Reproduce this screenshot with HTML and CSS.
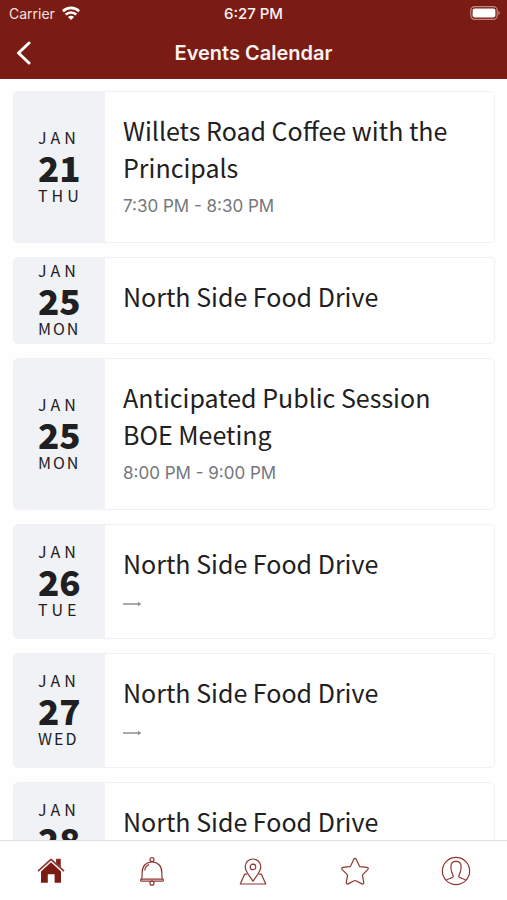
FILE: index.html
```html
<!DOCTYPE html>
<html lang="en">
<head>
<meta charset="utf-8">
<meta name="viewport" content="width=device-width, initial-scale=1">
<title>Events Calendar</title>
<link rel="stylesheet" href="styles.css">
</head>
<body>
<header class="top">
  <div class="status">
    <div class="carrier">
      <span>Carrier</span>
      <svg width="18" height="14" viewBox="0 0 18 14" fill="none" stroke="#fff" stroke-width="2.6" aria-hidden="true">
        <path d="M.9 5.200a11.600 11.600 0 0 1 16.200 0M3.700 8.600a7.600 7.600 0 0 1 10.600 0"/>
        <path d="M9 14 6 10.900a4.200 4.200 0 0 1 6 0z" fill="#fff" stroke="none"/>
      </svg>
    </div>
    <span class="clock">6:27 PM</span>
    <svg class="battery" width="30" height="14" viewBox="0 0 30 14" aria-hidden="true">
      <rect x=".8" y=".6" width="26.4" height="12.8" rx="3.8" fill="none" stroke="#bd8984" stroke-width="1.2"/>
      <rect x="2.6" y="2.4" width="22.8" height="9.2" rx="2" fill="#fff"/>
      <path d="M28.4 4.8q3 2.2 0 4.4z" fill="#bd8984"/>
    </svg>
  </div>
  <div class="nav">
    <button class="back" type="button" aria-label="Back">
      <svg width="16" height="24" viewBox="0 0 16 24" fill="none" stroke="#fff" stroke-width="3" stroke-linecap="round" stroke-linejoin="round"><path d="M13 2 2.500 12 13 22"/></svg>
    </button>
    <h1>Events Calendar</h1>
  </div>
</header>

<main class="events">
  <article class="card">
    <div class="date"><span class="label">JAN</span><span class="num">21</span><span class="label">THU</span></div>
    <div class="info"><h2>Willets Road Coffee with the Principals</h2><p>7:30 PM - 8:30 PM</p></div>
  </article>
  <article class="card">
    <div class="date"><span class="label">JAN</span><span class="num">25</span><span class="label wide">MON</span></div>
    <div class="info"><h2>North Side Food Drive</h2></div>
  </article>
  <article class="card">
    <div class="date"><span class="label">JAN</span><span class="num">25</span><span class="label wide">MON</span></div>
    <div class="info"><h2>Anticipated Public Session BOE Meeting</h2><p>8:00 PM - 9:00 PM</p></div>
  </article>
  <article class="card">
    <div class="date"><span class="label">JAN</span><span class="num">26</span><span class="label">TUE</span></div>
    <div class="info"><h2>North Side Food Drive</h2><p class="arrow"><svg width="19" height="6" viewBox="0 0 19 6" aria-hidden="true"><path d="M0 3h17" stroke="#8b8e91" stroke-width="1.3"/><path d="M15 .8 18.4 3 15 5.2z" fill="#8b8e91"/></svg></p></div>
  </article>
  <article class="card">
    <div class="date"><span class="label">JAN</span><span class="num">27</span><span class="label wide">WED</span></div>
    <div class="info"><h2>North Side Food Drive</h2><p class="arrow"><svg width="19" height="6" viewBox="0 0 19 6" aria-hidden="true"><path d="M0 3h17" stroke="#8b8e91" stroke-width="1.3"/><path d="M15 .8 18.4 3 15 5.2z" fill="#8b8e91"/></svg></p></div>
  </article>
  <article class="card">
    <div class="date"><span class="label">JAN</span><span class="num">28</span><span class="label">THU</span></div>
    <div class="info"><h2>North Side Food Drive</h2><p class="arrow"><svg width="19" height="6" viewBox="0 0 19 6" aria-hidden="true"><path d="M0 3h17" stroke="#8b8e91" stroke-width="1.3"/><path d="M15 .8 18.4 3 15 5.2z" fill="#8b8e91"/></svg></p></div>
  </article>
</main>

<nav class="tabs" aria-label="Main">
  <a href="#home" aria-label="Home">
    <svg viewBox="0 0 30 30"><path d="M20.6 3.4h3.6v7.2l-3.6-3.4z" fill="#7b1c14"/><path d="M2 15.2 15 3.4l13 11.8" stroke-width="1.7"/><path d="M5 15.4 15 6.3l10 9.1v11.3h-6.4v-8.5h-6.8v8.5H5z" fill="#7b1c14" stroke="none"/></svg>
  </a>
  <a href="#alerts" aria-label="Alerts">
    <svg viewBox="0 0 30 30"><path d="M4.600 23.200c-1.400 0-1.500 2 0 2h20.800c1.500 0 1.400-2 0-2-.6-1.900-.5-2.400-.6-7 0-6.200-4-10.200-9.800-10.200s-9.800 4-9.800 10.200c-.1 4.600 0 5.100-.6 7zM4.600 23.200h20.800M7.800 14.500c.2-3 1.800-5 4.400-5.900"/><circle cx="15" cy="3.600" r="2"/><circle cx="15" cy="27.200" r="2"/></svg>
  </a>
  <a href="#places" aria-label="Places">
    <svg viewBox="0 0 30 30"><path d="M15 25.300c-2.400-4.300-7.800-9.300-7.800-14.500a7.800 7.800 0 0 1 15.600 0c0 5.200-5.400 10.200-7.800 14.500z"/><circle cx="15" cy="10.900" r="2.800"/><path d="M9 18.200H6.600L2.300 28h25.400l-4.300-9.800H21"/></svg>
  </a>
  <a href="#favorites" aria-label="Favorites">
    <svg viewBox="0 0 30 30"><path d="M13.900 3.200q1.100-1.500 2.200 0l3.300 6.800q.2.500.8.600l7 .8q1.700.4.700 1.900l-5.100 5.300q-.4.400-.3 1l1.300 7q0 1.900-1.800 1.300l-6.200-3.100q-.8-.4-1.600 0L8 27.900q-1.800.6-1.800-1.300l1.300-7q.1-.6-.3-1l-5.100-5.300q-1-1.500.7-1.900l7-.8q.6-.1.800-.6z"/></svg>
  </a>
  <a href="#profile" aria-label="Profile">
    <svg viewBox="0 0 30 30"><circle cx="15" cy="15" r="13.600"/><path d="M5.300 24.200c1.500-1.700 6.700-2 6.900-3.600.2-2.200-.9-2.400-1.500-4.600-.5-2-1-3.500-.8-5.900.2-3.100 2.300-4.700 5.100-4.700s4.900 1.600 5.100 4.700c.2 2.400-.3 3.900-.8 5.900-.6 2.200-1.700 2.400-1.500 4.600.2 1.600 5.400 1.900 6.900 3.600"/></svg>
  </a>
</nav>
</body>
</html>
```
FILE: styles.css
```css
* {
  box-sizing: border-box;
}

body {
  margin: 0;
  height: 100vh;
  display: flex;
  flex-direction: column;
  background: #fefefe;
  color: #1e2022;
  font-family: Inter, "Liberation Sans", sans-serif;
}

h1,
h2,
p {
  margin: 0;
  font-weight: 400;
}

.top {
  flex: none;
  background: #7b1c14;
  color: #fbf3f1;
}

.status {
  display: grid;
  grid-template-columns: 1fr auto 1fr;
  align-items: center;
  height: 26px;
  padding: 0 7px;
  font-size: 14px;
}

.carrier {
  display: flex;
  align-items: center;
  gap: 7px;
  padding-left: 2px;
  color: #f3e2df;
}

.clock {
  font-size: 15px;
  font-weight: 500;
}

.battery {
  justify-self: end;
}

.nav {
  display: grid;
  grid-template-columns: 48px 1fr 48px;
  align-items: center;
  height: 53px;
}

.back {
  display: flex;
  padding: 0 0 0 16px;
  border: 0;
  background: none;
}

h1 {
  text-align: center;
  font-size: 20px;
  font-weight: 600;
  line-height: 24px;
}

.events {
  flex: 1;
  min-height: 0;
  overflow: hidden;
  display: flex;
  flex-direction: column;
  gap: 14px;
  padding: 12px 12px 0 13px;
}

.card {
  flex: none;
  display: flex;
  border: 1px solid #eff1f4;
  border-radius: 5px;
  overflow: hidden;
  background: #fff;
  font-family: "Noto Sans CJK SC", "Noto Sans", sans-serif;
}

.date {
  flex: none;
  width: 91px;
  display: flex;
  flex-direction: column;
  justify-content: center;
  padding: 0 0 2px 24px;
  background: #f1f2f6;
}

.label {
  font-size: 16px;
  line-height: 25px;
  letter-spacing: 4px;
}

.wide {
  letter-spacing: 2px;
}

.num {
  font-size: 35px;
  font-weight: 900;
  line-height: 33px;
}

.info {
  flex: 1;
  display: flex;
  flex-direction: column;
  gap: 5px;
  padding: 20px 18px 21px;
}

h2 {
  font-size: 25px;
  line-height: 37px;
}

.card:has(h2:only-child) .info {
  padding-bottom: 28px;
}

p {
  font-family: Inter, "Liberation Sans", sans-serif;
  font-size: 17px;
  line-height: 30px;
  color: #74787c;
}

.arrow {
  display: flex;
  align-items: center;
  height: 30px;
  padding-top: 4px;
}

.tabs {
  flex: none;
  display: grid;
  grid-template-columns: repeat(5, 1fr);
  height: 60px;
  border-top: 1px solid #dfe0e2;
}

.tabs a {
  display: flex;
  align-items: center;
  justify-content: center;
}

.tabs svg {
  width: 30px;
  height: 30px;
  fill: none;
  stroke: #8d3730;
  stroke-width: 1.2;
  stroke-linejoin: round;
}
```
